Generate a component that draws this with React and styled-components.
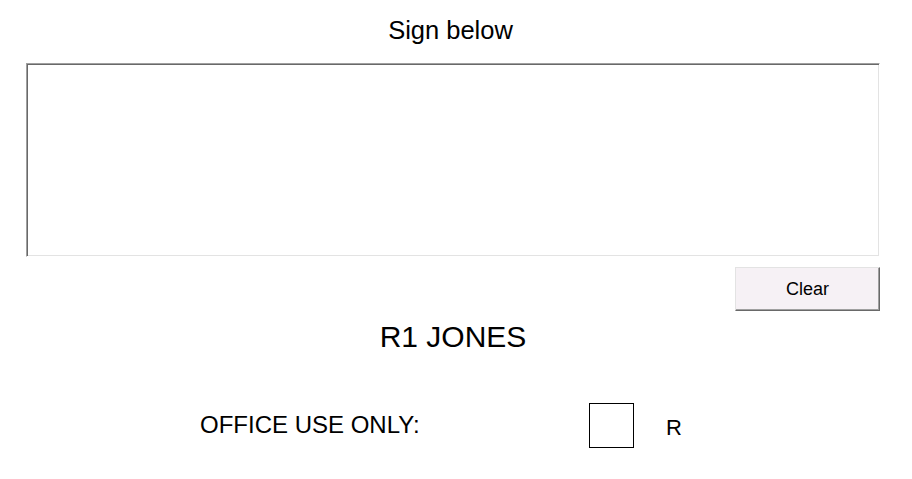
import React from "react";
import styled, { createGlobalStyle } from "styled-components";

const GlobalStyle = createGlobalStyle`
	body {
		margin: 0;
		background: #ffffff;
		font-family: "Liberation Sans", Arial, sans-serif;
		color: #000000;
	}
`;

function App() {
	return (
		<>
			<GlobalStyle />
			<StyledPage>
				<h1 className="title">Sign below</h1>
				<div className="pad" />
				<div className="actions">
					<button className="clear">Clear</button>
				</div>
				<h2 className="name">R1 JONES</h2>
				<div className="office">
					<span className="label">OFFICE USE ONLY:</span>
					<span className="box" />
					<span className="mark">R</span>
				</div>
			</StyledPage>
		</>
	);
}

const StyledPage = styled.div`
	width: 854px;
	margin-left: 26px;
	padding-top: 16px;

	.title {
		margin: 0;
		padding-right: 5px;
		font-size: 25.5px;
		line-height: 29px;
		font-weight: 400;
		text-align: center;
	}

	.pad {
		box-sizing: border-box;
		height: 194px;
		margin-top: 18px;
		background: #ffffff;
		border: 1px solid;
		border-color: #a0a0a0 #ffffff #ffffff #a0a0a0;
		box-shadow: inset 1px 1px 0 #696969, inset -1px -1px 0 #e3e3e3;
	}

	.actions {
		display: flex;
		justify-content: flex-end;
		margin-top: 10px;
	}

	.clear {
		box-sizing: border-box;
		width: 145px;
		height: 44px;
		padding: 0;
		background: #f6f1f5;
		font-family: "Liberation Sans", Arial, sans-serif;
		font-size: 18px;
		color: #000000;
		border: 1px solid;
		border-color: #e3e3e3 #696969 #696969 #e3e3e3;
		box-shadow: inset -1px -1px 0 #a0a0a0;
		cursor: pointer;
	}

	.name {
		margin: 9px 0 0;
		font-size: 30px;
		line-height: 34px;
		font-weight: 400;
		text-align: center;
	}

	.office {
		display: flex;
		align-items: flex-start;
		margin-top: 49px;
		padding-left: 174px;
		font-size: 24px;
		line-height: 26px;
	}

	.label {
		margin-top: 9px;
		width: 389px;
	}

	.box {
		box-sizing: border-box;
		width: 45px;
		height: 45px;
		border: 1px solid #000000;
	}

	.mark {
		margin-top: 12px;
		margin-left: 32px;
		font-size: 22px;
	}
`;

export default App;
